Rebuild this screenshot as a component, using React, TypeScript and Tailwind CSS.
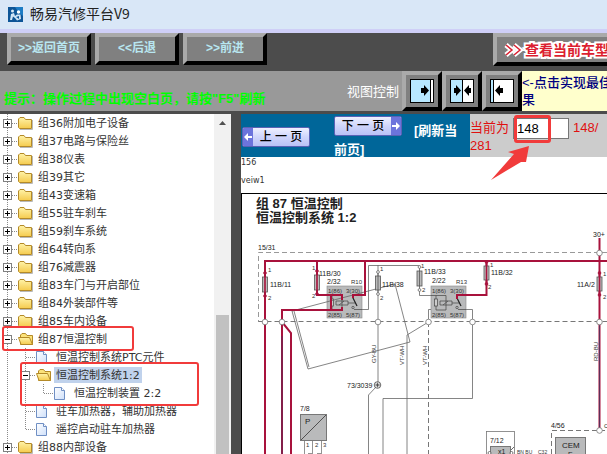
import React from "react";

type Branch = "line" | "join" | "end" | "plus" | "minus";

type TreeRow = {
  label: string;
  icon: "folder" | "open" | "page";
  branches: Branch[];
  selected?: boolean;
};

const group = (label: string): TreeRow => ({ label, icon: "folder", branches: ["plus"] });

const rows: TreeRow[] = [
  group("组36附加电子设备"),
  group("组37电路与保险丝"),
  group("组38仪表"),
  group("组39其它"),
  group("组43变速箱"),
  group("组55驻车刹车"),
  group("组59刹车系统"),
  group("组64转向系"),
  group("组76减震器"),
  group("组83车门与开启部位"),
  group("组84外装部件等"),
  group("组85车内设备"),
  { label: "组87恒温控制", icon: "open", branches: ["minus"] },
  { label: "恒温控制系统PTC元件", icon: "page", branches: ["line", "join"] },
  { label: "恒温控制系统1:2", icon: "open", branches: ["line", "minus"], selected: true },
  { label: "恒温控制装置 2:2", icon: "page", branches: ["line", "line", "end"] },
  { label: "驻车加热器，辅助加热器", icon: "page", branches: ["line", "join"] },
  { label: "遥控启动驻车加热器", icon: "page", branches: ["line", "end"] },
  group("组88内部设备"),
];

function BranchLines({ kind }: { kind: Branch }) {
  const node = kind === "plus" || kind === "minus";
  return (
    <svg width="18" height="18" viewBox="0 0 18 18" className="block shrink-0" aria-hidden="true">
      <path
        d={kind === "end" ? "M7.5 0V9" : "M7.5 0V18"}
        stroke="#8a8a8a"
        strokeDasharray="1 1"
        fill="none"
      />
      {kind !== "line" && (
        <path d="M8 9.5H18" stroke="#8a8a8a" strokeDasharray="1 1" fill="none" />
      )}
      {node && <rect x="3.5" y="5.5" width="8" height="8" fill="#fff" stroke="#808080" />}
      {node && <path d="M5 9.5H10" stroke="#000" />}
      {kind === "plus" && <path d="M7.5 7V12" stroke="#000" />}
    </svg>
  );
}

function NodeIcon({ icon }: { icon: TreeRow["icon"] }) {
  return (
    <svg width="18" height="18" viewBox="0 0 18 18" className="block shrink-0" aria-hidden="true">
      <defs>
        <linearGradient id="folderFill" x1="0" y1="0" x2="0" y2="1">
          <stop offset="0" stopColor="#fff3a8" />
          <stop offset="1" stopColor="#f5cb4e" />
        </linearGradient>
        <linearGradient id="pageFill" x1="0" y1="0" x2="1" y2="1">
          <stop offset="0" stopColor="#ffffff" />
          <stop offset="1" stopColor="#cfe0fa" />
        </linearGradient>
      </defs>
      {icon === "folder" && (
        <>
          <path d="M2 15.5H14.5V6" stroke="#b9b9b9" fill="none" />
          <path
            d="M.5 13.5V5L2 3.5H6L7.5 5.5H13.5V14.5H1.5Z"
            fill="url(#folderFill)"
            stroke="#b48a28"
          />
        </>
      )}
      {icon === "open" && (
        <>
          <path d="M2.5 14.5V5L4 3.5H7.5L9 5.5H14.5V14.5Z" fill="#fbe27a" stroke="#b48a28" />
          <path d="M.5 7.5H11.5L14.5 14.5H3Z" fill="url(#folderFill)" stroke="#b48a28" />
        </>
      )}
      {icon === "page" && (
        <>
          <path d="M.5 3.5H7.5L10.5 6.5V15.5H.5Z" fill="url(#pageFill)" stroke="#6f8fc4" />
          <path d="M7.5 3.5V6.5H10.5" fill="#fff" stroke="#6f8fc4" />
        </>
      )}
    </svg>
  );
}

function Tree() {
  return (
    <div className="relative min-w-0 flex-1 overflow-hidden bg-white">
      <ul>
        {rows.map((row) => (
          <li key={row.label} className="flex h-[18px]">
            {row.branches.map((b, i) =>
              b === "plus" || b === "minus" ? (
                <button
                  key={i}
                  type="button"
                  aria-label={b === "plus" ? "展开" : "折叠"}
                  className="block size-[18px] shrink-0"
                >
                  <BranchLines kind={b} />
                </button>
              ) : (
                <BranchLines key={i} kind={b} />
              ),
            )}
            <NodeIcon icon={row.icon} />
            <a
              href="#"
              className={`my-px h-4 whitespace-nowrap px-[2px] font-['DejaVu_Sans','Noto_Sans_CJK_SC',sans-serif] text-[11px] leading-[18px] text-[#333] ${
                row.selected ? "bg-[#c0d2ec]" : ""
              }`}
            >
              {row.label}
            </a>
          </li>
        ))}
      </ul>
      <div className="absolute left-[2px] top-[212px] h-[25px] w-[132px] rounded-[3px] border-2 border-[#f13b3b]" />
      <div className="absolute left-[20px] top-[248px] h-[44px] w-[179px] rounded-[3px] border-2 border-[#f13b3b]" />
    </div>
  );
}

const bevel =
  "border-4 border-t-[#aaaaaa] border-l-[#aaaaaa] border-r-black border-b-black bg-[#808080]";

function NavButton({ children }: { children: React.ReactNode }) {
  return (
    <button
      type="button"
      className={`h-8 w-[84px] whitespace-nowrap pb-[2px] text-[12px] font-bold leading-4 text-[#b8e6f0] ${bevel}`}
    >
      {children}
    </button>
  );
}

function ViewButton({ label, children }: { label: string; children: React.ReactNode }) {
  return (
    <button
      type="button"
      aria-label={label}
      className={`flex size-10 shrink-0 items-center justify-center ${bevel}`}
    >
      <svg width="24" height="24" viewBox="0 0 24 24">
        <rect x=".5" y=".5" width="23" height="23" fill="#fff" />
        {children}
        <rect x=".5" y=".5" width="23" height="23" fill="none" stroke="#000" />
      </svg>
    </button>
  );
}

function PageButton({ dir, children }: { dir: "prev" | "next"; children: React.ReactNode }) {
  const block = (
    <span className="flex w-[10px] items-center justify-center bg-[#6c74dc]">
      <svg width="8" height="8" viewBox="0 0 8 8" aria-hidden="true">
        <path d={dir === "prev" ? "M0 4L4 0V3H8V5H4V8Z" : "M8 4L4 0V3H0V5H4V8Z"} fill="#fff" />
      </svg>
    </span>
  );
  return (
    <button
      type="button"
      className="inline-flex h-5 w-[68px] items-stretch overflow-hidden whitespace-nowrap rounded-[2px] border border-[#5a62b4] bg-linear-to-b from-[#eef0ff] via-[#cfd5fb] to-[#b9c2f6] align-[5px] text-[12px] font-medium leading-[18px] text-black"
    >
      {dir === "prev" && block}
      <span className="flex-1 text-center">{children}</span>
      {dir === "next" && block}
    </button>
  );
}

function Fuse({ x, y, hot, h = 14 }: { x: number; y: number; hot?: boolean; h?: number }) {
  const c = hot ? "#a8123c" : "#555";
  return (
    <g>
      <rect x={x - 2.5} y={y} width="5" height={h} fill="#bbb" stroke="#555" strokeWidth=".8" />
      <path d={`M${x} ${y - 4}V${y + h + 4}`} stroke={c} strokeWidth={hot ? 1.6 : 0.8} />
      <circle cx={x} cy={y - 4} r="1.4" fill={hot ? c : "#fff"} stroke={c} strokeWidth=".7" />
      <circle cx={x} cy={y + h + 4} r="1.4" fill={hot ? c : "#fff"} stroke={c} strokeWidth=".7" />
    </g>
  );
}

function Relay({ x, y }: { x: number; y: number }) {
  return (
    <g transform={`translate(${x} ${y})`}>
      <rect width="35" height="32" fill="#b9babb" stroke="#888" strokeWidth=".6" />
      <g fill="none" stroke="#444" strokeWidth=".7">
        <path d="M0 9.5H15V24H5V9.5M9 15H21V19H9ZM12 19L17 15M21 17H28" />
        <rect x="3.5" y="13" width="3" height="7" fill="#ccc" />
        <circle cx="26" cy="21.5" r="1.2" />
        <path d="M27 23.5H35" />
      </g>
      <path d="M25.5 11L30 20" stroke="#222" strokeWidth="1.2" />
      <g fontSize="6" fill="#333">
        <text x="1" y="7">1(86)</text>
        <text x="19" y="7">3(30)</text>
        <text x="1" y="31">2(85)</text>
        <text x="19" y="31">5(87)</text>
      </g>
    </g>
  );
}

const taps = [
  [265, 322],
  [282, 322],
  [378, 322],
  [428.5, 322],
  [472.5, 322],
  [599.5, 322],
  [599.5, 253],
  [599.5, 430.5],
];

function WiringDiagram() {
  return (
    <svg
      width="365"
      height="230"
      viewBox="242 224 365 230"
      className="block max-w-none font-['Liberation_Sans',Arial,sans-serif]"
      role="img"
      aria-label="恒温控制系统 1:2"
    >
      <g fill="none" stroke="#999" strokeWidth="1" strokeDasharray="5 3">
        <path d="M607 252.5H258.5V322" />
        <path d="M258.5 321.5H607" stroke="#777" />
        <path d="M428.5 322V454" stroke="#777" />
        <path d="M551.5 454V430.5H607" stroke="#777" />
      </g>
      <Relay x={327} y={286} />
      <Relay x={431} y={286} />
      <g fill="none" stroke="#666" strokeWidth=".8">
        <path d="M362 309.5H368.5V265.5H419.5M378 265V382M419.5 290V295.5H431" />
        <path d="M466 309.5H472.5V398.5H383V454M431 309.5H428.5V322L407 335V454" />
        <path d="M376 387L368.5 395V454" />
        <path d="M292 311L395 284L410 342L308 369ZM294 311L309 367" />
      </g>
      <g fill="none" stroke="#a8123c" strokeWidth="2">
        <path d="M264 261H607M265 261V454M317 261V295H342V300M365 261V295H353V298" />
        <path d="M342 307V310H282V454M282 322L291 333V454M486.5 261V295H457V299M331 295V310" />
        <path d="M599.5 238V430" />
      </g>
      <path d="M599.5 325V428M282 336V454" stroke="#4b3560" strokeWidth=".8" />
      <Fuse x={265} y={277} h={15} hot />
      <Fuse x={317} y={275} h={15} hot />
      <Fuse x={486.5} y={266} hot />
      <Fuse x={599.5} y={277} hot />
      <Fuse x={378} y={276} />
      <Fuse x={419.5} y={271} h={15} />
      {taps.map(([cx, cy]) => (
        <circle key={`${cx}-${cy}`} cx={cx} cy={cy} r="2.8" fill="#fff" stroke="#777" strokeWidth=".8" />
      ))}
      <g fill="none" stroke="#444" strokeWidth=".8">
        <circle cx="377.5" cy="385" r="3.3" fill="#fff" />
        <path d="M375 385H380M377.5 382.5V387.5M376 383.5L379 386.5M379 383.5L376 386.5" />
      </g>
      <rect x="300.5" y="414.5" width="26" height="26" fill="#b9babb" stroke="#777" />
      <path d="M301 440L326 415" stroke="#333" strokeWidth=".8" />
      <path
        d="M304.5 441V454M312.5 441V454M321.5 441V454M308 453.5H312M317 453.5H321"
        stroke="#777"
        strokeWidth=".8"
      />
      <rect x="486.5" y="431.5" width="28" height="30" fill="none" stroke="#777" strokeWidth=".8" />
      <rect x="490.5" y="446.5" width="20" height="14" fill="#b9babb" stroke="#777" />
      <path d="M511 450L514 447" stroke="#444" strokeWidth=".8" />
      <circle cx="489.5" cy="453" r="1.5" fill="#fff" stroke="#444" strokeWidth=".7" />
      <circle cx="511.5" cy="453" r="1.5" fill="#fff" stroke="#444" strokeWidth=".7" />
      <rect x="555.5" y="437.5" width="30" height="24" fill="#b9babb" stroke="#777" />
      <g fontSize="7" fill="#222">
        <text x="258" y="250">15/31</text>
        <text x="270" y="287">11B/11</text>
        <text x="319" y="276">11B/30</text>
        <text x="327" y="284">2/32</text>
        <text x="382" y="287">11B/38</text>
        <text x="424" y="274">11B/33</text>
        <text x="432" y="283">2/22</text>
        <text x="491" y="275">11B/32</text>
        <text x="577" y="287">11A/2</text>
        <text x="593" y="237">30+</text>
        <text x="347" y="388">73/3039</text>
        <text x="300" y="411">7/8</text>
        <text x="305" y="424" fontSize="8">P</text>
        <text x="490" y="443">7/12</text>
        <text x="551" y="428">4/56</text>
        <text x="562" y="448" fontSize="8">CEM</text>
        <text x="568" y="457">E</text>
        <text x="498" y="454">x1</text>
        <text x="604" y="428" fontSize="6">C</text>
      </g>
      <g fontSize="6" fill="#333">
        <text x="351" y="284">R10</text>
        <text x="456" y="284">R13</text>
        <text x="268" y="272">1</text>
        <text x="268" y="300">2</text>
        <text x="312" y="270">1</text>
        <text x="312" y="298">2</text>
        <text x="380" y="271">1</text>
        <text x="380" y="300">2</text>
        <text x="421" y="268">1</text>
        <text x="422" y="292">2</text>
        <text x="490" y="267">1</text>
        <text x="488" y="289">2</text>
        <text x="603" y="276">1</text>
        <text x="603" y="299">2</text>
        <text x="306" y="447">1</text>
        <text x="315" y="447">2</text>
        <text x="323" y="447">3</text>
        <text x="517" y="454" fontSize="5">BN BU</text>
        <text x="538" y="454" fontSize="5">C32</text>
        <text transform="translate(376 363) rotate(-90)">GY-BU</text>
        <text transform="translate(404 365) rotate(-90)">VT-WH</text>
        <text transform="translate(427 365) rotate(-90)">VT-WH</text>
        <text transform="translate(598 361) rotate(-90)">RD-BU</text>
      </g>
    </svg>
  );
}

export default function App() {
  return (
    <div className="flex h-screen flex-col overflow-hidden bg-[#4c4c4c] font-['Liberation_Sans','Noto_Sans_CJK_SC',sans-serif]">
      <header className="flex h-[33px] shrink-0 items-center gap-[7px] border-b-4 border-[#cfcff7] bg-[#d9e7f7] pl-2">
        <svg width="15" height="15" viewBox="0 0 15 15" aria-hidden="true">
          <rect width="15" height="15" fill="#0d5597" />
          <path d="M7 0H15V9L11 6Z" fill="#1d7cc4" />
          <circle cx="4.5" cy="4" r="1.5" fill="#dcebf7" />
          <circle cx="10.5" cy="5" r="1.7" fill="#fff" />
          <path d="M2 13L3 7L6 6L7 9L9 7.5H12.5L13 12L9 13.5L7 11L5 9.5L4 13Z" fill="#cfe4f6" />
          <path d="M8 10L11 9L11 12Z" fill="#0d5597" />
        </svg>
        <h1 className="pb-[3px] font-['Noto_Sans_CJK_SC',sans-serif] text-[14px] leading-5 text-[#222]">
          畅易汽修平台V9
        </h1>
      </header>

      <nav className="flex h-[38px] shrink-0 gap-1 pl-[7px]">
        <NavButton>&gt;&gt;返回首页</NavButton>
        <NavButton>&lt;&lt;后退</NavButton>
        <NavButton>&gt;&gt;前进</NavButton>
        <div className="ml-auto w-[114px] overflow-hidden">
          <button
            type="button"
            className={`flex h-[33px] w-[132px] items-center gap-1 pl-2 text-[14px] font-bold leading-5 text-[#dc1f30] ${bevel}`}
          >
            <svg width="16" height="12" viewBox="0 0 16 12" className="shrink-0 overflow-visible" aria-hidden="true">
              <path d="M1 1L7 6L1 11M9 1L15 6L9 11" fill="none" stroke="#fff" strokeWidth="5" />
              <path d="M1 1L7 6L1 11M9 1L15 6L9 11" fill="none" stroke="#dc1f30" strokeWidth="1.5" />
            </svg>
            <span className="whitespace-nowrap [-webkit-text-stroke:4px_#fff] [paint-order:stroke_fill]">
              查看当前车型
            </span>
          </button>
        </div>
      </nav>

      <section className="flex h-10 shrink-0 bg-[#999999]">
        <p className="min-w-0 flex-1 whitespace-nowrap pl-1 pt-[18px] text-[13px] font-bold leading-5 text-[#00ff00]">
          提示：操作过程中出现空白页，请按"F5"刷新
        </p>
        <span className="pr-[3px] pt-[11px] text-[13px] leading-5 text-white">视图控制</span>
        <ViewButton label="左侧展开">
          <path d="M1 1H20V23H1Z" fill="#b8e8ff" />
          <path d="M20.5 0V24" stroke="#000" />
          <path d="M11 9H14V6L19 11.5L14 17V14H11Z" fill="#000" />
        </ViewButton>
        <ViewButton label="左右平分">
          <path d="M1 1H12V23H1Z" fill="#b8e8ff" />
          <path d="M12.5 0V24" stroke="#000" />
          <path d="M4 9H6V6L11 11.5L6 17V14H4ZM21 9H19V6L14 11.5L19 17V14H21Z" fill="#000" />
        </ViewButton>
        <ViewButton label="右侧展开">
          <path d="M1 1H3V23H1Z" fill="#b8e8ff" />
          <path d="M3.5 0V24" stroke="#000" />
          <path d="M13 9H10V6L5 11.5L10 17V14H13Z" fill="#000" />
        </ViewButton>
        <p className="w-[85px] shrink-0 overflow-hidden whitespace-nowrap bg-[#ffffcc] pt-[3px] text-[13px] font-medium leading-[17px] text-[#000080]">
          &lt;-点击实现最佳
          <br />果
        </p>
      </section>

      <div className="mt-[3px] flex min-h-0 flex-1">
        <aside className="flex w-[231px] shrink-0">
          <Tree />
          <div className="flex w-[17px] shrink-0 flex-col items-center bg-[#f1f1f1]" aria-hidden="true">
            <svg width="17" height="17" viewBox="0 0 17 17">
              <path d="M5 11H12L8.5 7Z" fill="#505050" />
            </svg>
            <div className="mt-[184px] w-[13px] flex-1 bg-[#c1c1c1]" />
          </div>
        </aside>

        <main className="ml-[10px] flex min-w-0 flex-1 flex-col overflow-hidden bg-white">
          <div className="relative flex h-[43px] shrink-0 bg-[#cccccc]">
            <div className="flex min-w-0 flex-1 bg-[#006699] pt-[2px]">
              <div className="flex w-[93px] shrink-0 items-start pl-px pt-[11px]">
                <PageButton dir="prev">上 一 页</PageButton>
              </div>
              <div className="w-[132px] text-[13px] font-bold leading-[19px] text-white">
                <PageButton dir="next">下 一 页</PageButton>
                <a href="#" className="ml-3">
                  [刷新当
                  <br />
                  前页]
                </a>
              </div>
            </div>
            <form className="w-[137px] shrink-0 pt-1 text-[13px] leading-5 text-[#e01010]">
              <label htmlFor="page" className="mr-1">
                当前为
              </label>
              <input
                id="page"
                defaultValue="148"
                className="h-[21px] w-14 border border-[#777] bg-white pl-[3px] align-top text-[13px] text-black"
              />
              <span className="ml-1">148/</span>
              <br />
              <span className="block leading-[14px]">281</span>
            </form>
            <div className="absolute right-[56px] top-px h-[28px] w-[37px] rounded-[3px] border-[3px] border-[#f13b3b]" />
            <svg width="40" height="36" viewBox="0 0 40 36" className="absolute right-[77px] top-[31px]" aria-hidden="true">
              <path d="M39 1L18 7L24 9L1 35L31 17L36 17Z" fill="#f13b3b" />
            </svg>
          </div>
          <div className="flex shrink-0 flex-col gap-2 pb-[7px] pt-px font-['DejaVu_Sans',sans-serif] text-[8px] leading-[10px] text-[#333]">
            <p>156</p>
            <p>veiw1</p>
          </div>
          <section className="min-h-0 flex-1 overflow-hidden border-l border-t border-black">
            <h2 className="h-[30px] pl-[14px] pt-[3px] font-['Liberation_Sans','Noto_Sans_CJK_SC',sans-serif] text-[13px] font-bold leading-[14px] text-[#222]">
              组 87 恒温控制
              <br />
              恒温控制系统 1:2
            </h2>
            <WiringDiagram />
          </section>
        </main>
      </div>
    </div>
  );
}
